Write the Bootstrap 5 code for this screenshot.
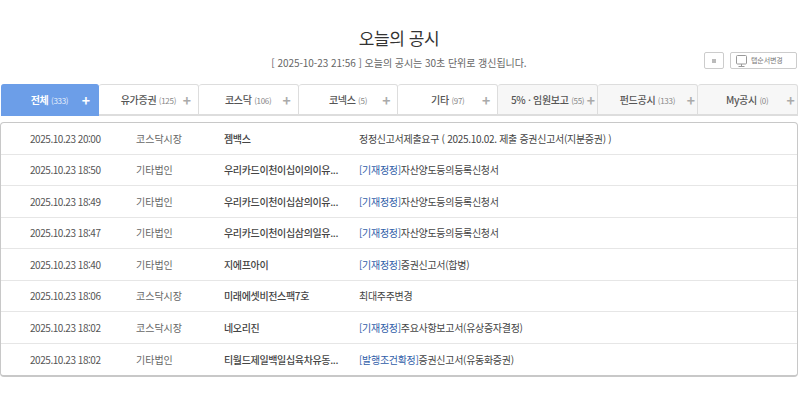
<!DOCTYPE html>
<html lang="ko">
<head>
    <meta charset="UTF-8">
    <meta name="viewport" content="width=device-width, initial-scale=1.0">
    <title>오늘의 공시</title>
    <link href="https://cdn.jsdelivr.net/npm/bootstrap@5.3.3/dist/css/bootstrap.min.css" rel="stylesheet">
    <style>
        body {
            font-family: "Noto Sans CJK KR", "Liberation Sans", sans-serif;
            font-size: 10px;
            color: #444;
            background: #fff;
            overflow: hidden;
        }

        .page-wrap {
            width: 800px;
            height: 400px;
            padding-top: 26px;
        }

        .top-head {
            height: 58px;
            padding-right: 2px;
        }

        .top-title {
            font-size: 17px;
            font-weight: 400;
            line-height: 24px;
            letter-spacing: -0.4px;
            color: #333;
            margin: 0;
        }

        .top-sub {
            font-size: 10px;
            line-height: 14px;
            letter-spacing: -0.05px;
            color: #666;
            margin: 6px 0 0;
        }

        .top-tools {
            right: 3px;
            top: 26px;
        }

        .tool-btn {
            height: 17px;
            border: 1px solid #ccc;
            border-radius: 2px;
            background: #fff;
            padding: 0;
            color: #777;
            font-size: 7px;
        }

        .tool-small {
            width: 20px;
            margin-right: 6px;
        }

        .tool-small span {
            width: 4px;
            height: 4px;
            background: #bbb;
        }

        .tool-wide {
            width: 67px;
            gap: 4px;
            padding-left: 5px;
            letter-spacing: -0.1px;
        }

        .tab-bar {
            height: 32px;
            padding-left: 1px;
        }

        .tab-cell {
            flex: 0 0 99.8px;
            border: 1px solid #ddd;
            border-bottom-width: 2px;
            border-left: 0;
            border-radius: 3px 3px 0 0;
            background: #fff;
            color: #555;
            font-size: 10px;
            font-weight: 500;
            padding: 0 5px;
        }

        .tab-cell.tab-on {
            flex-basis: 98px;
            padding: 0 6px;
            background: #6c9ee8;
            border-color: #6c9ee8;
            color: #fff;
        }

        .tab-cell.tab-grey {
            background: #f7f7f7;
            padding: 0;
        }

        .tab-label {
            flex: 1;
            text-align: center;
            white-space: nowrap;
            letter-spacing: -0.3px;
        }

        .tab-count {
            font-size: 8px;
            font-weight: 400;
            color: #888;
        }

        .tab-on .tab-count {
            color: #e8f0fc;
        }

        .tab-plus {
            flex: 0 0 12px;
            margin-left: -12px;
            text-align: center;
            font-size: 14px;
            font-weight: 700;
            line-height: 1;
            color: #aaa;
        }

        .tab-on .tab-plus {
            color: #fff;
        }

        .list-box {
            margin: 6px 2px 0 0;
            border: 1px solid #c8c8c8;
            border-bottom-width: 2px;
            border-radius: 4px;
        }

        .list-line {
            height: 31.5px;
            border-bottom: 1px solid #e6e6e6;
            font-size: 10px;
        }

        .list-line:last-child {
            border-bottom: 0;
        }

        .cell-date {
            width: 135px;
            padding-left: 29px;
            letter-spacing: -0.45px;
            color: #555;
        }

        .cell-market {
            width: 88px;
            color: #666;
        }

        .cell-name {
            width: 135px;
            font-weight: 500;
            letter-spacing: -0.35px;
            color: #444;
            white-space: nowrap;
        }

        .cell-doc {
            letter-spacing: -0.3px;
            color: #444;
            white-space: nowrap;
        }

        .doc-tag {
            color: #2f5da8;
        }
    </style>
</head>
<body>

    <div class="page-wrap">
        <div class="top-head position-relative text-center">
            <h1 class="top-title">오늘의 공시</h1>
            <p class="top-sub">[ 2025-10-23 21:56 ] 오늘의 공시는 30초 단위로 갱신됩니다.</p>
            <div class="top-tools position-absolute d-flex">
                <button type="button" class="tool-btn tool-small d-flex align-items-center justify-content-center"><span></span></button>
                <button type="button" class="tool-btn tool-wide d-flex align-items-center">
                    <svg width="11" height="12" viewBox="0 0 11 12" fill="none" stroke="#999" stroke-width="1"><rect x="0.500" y="0.500" width="10" height="8.500" rx="1"/><path d="M2.500 11.500h6M5.500 9v2.500"/></svg>
                    <span>탭순서변경</span>
                </button>
            </div>
        </div>

        <div class="tab-bar d-flex">
            <div class="tab-cell tab-on d-flex align-items-center"><span class="tab-label"><b>전체</b> <span class="tab-count">(333)</span></span><span class="tab-plus">+</span></div>
            <div class="tab-cell d-flex align-items-center"><span class="tab-label">유가증권 <span class="tab-count">(125)</span></span><span class="tab-plus">+</span></div>
            <div class="tab-cell d-flex align-items-center"><span class="tab-label">코스닥 <span class="tab-count">(106)</span></span><span class="tab-plus">+</span></div>
            <div class="tab-cell d-flex align-items-center"><span class="tab-label">코넥스 <span class="tab-count">(5)</span></span><span class="tab-plus">+</span></div>
            <div class="tab-cell d-flex align-items-center"><span class="tab-label">기타 <span class="tab-count">(97)</span></span><span class="tab-plus">+</span></div>
            <div class="tab-cell tab-grey d-flex align-items-center"><span class="tab-label">5% · 임원보고 <span class="tab-count">(55)</span></span><span class="tab-plus">+</span></div>
            <div class="tab-cell tab-grey d-flex align-items-center"><span class="tab-label">펀드공시 <span class="tab-count">(133)</span></span><span class="tab-plus">+</span></div>
            <div class="tab-cell tab-grey d-flex align-items-center"><span class="tab-label">My공시 <span class="tab-count">(0)</span></span><span class="tab-plus">+</span></div>
        </div>

        <div class="list-box" id="disclosureList"></div>
    </div>

    <script>
        const rows = [
            ["2025.10.23 20:00", "코스닥시장", "젬백스", "", "정정신고서제출요구 ( 2025.10.02. 제출 증권신고서(지분증권) )"],
            ["2025.10.23 18:50", "기타법인", "우리카드이천이십이의이유...", "[기재정정]", "자산양도등의등록신청서"],
            ["2025.10.23 18:49", "기타법인", "우리카드이천이십삼의이유...", "[기재정정]", "자산양도등의등록신청서"],
            ["2025.10.23 18:47", "기타법인", "우리카드이천이십삼의일유...", "[기재정정]", "자산양도등의등록신청서"],
            ["2025.10.23 18:40", "기타법인", "지에프아이", "[기재정정]", "증권신고서(합병)"],
            ["2025.10.23 18:06", "코스닥시장", "미래에셋비전스팩7호", "", "최대주주변경"],
            ["2025.10.23 18:02", "코스닥시장", "네오리진", "[기재정정]", "주요사항보고서(유상증자결정)"],
            ["2025.10.23 18:02", "기타법인", "티월드제일백일십육차유동...", "[발행조건확정]", "증권신고서(유동화증권)"]
        ];

        document.getElementById("disclosureList").innerHTML = rows.map(r => `
            <div class="list-line d-flex align-items-center">
                <div class="cell-date">${r[0]}</div>
                <div class="cell-market">${r[1]}</div>
                <div class="cell-name">${r[2]}</div>
                <div class="cell-doc"><span class="doc-tag">${r[3]}</span>${r[4]}</div>
            </div>`).join("");
    </script>

</body>
</html>
